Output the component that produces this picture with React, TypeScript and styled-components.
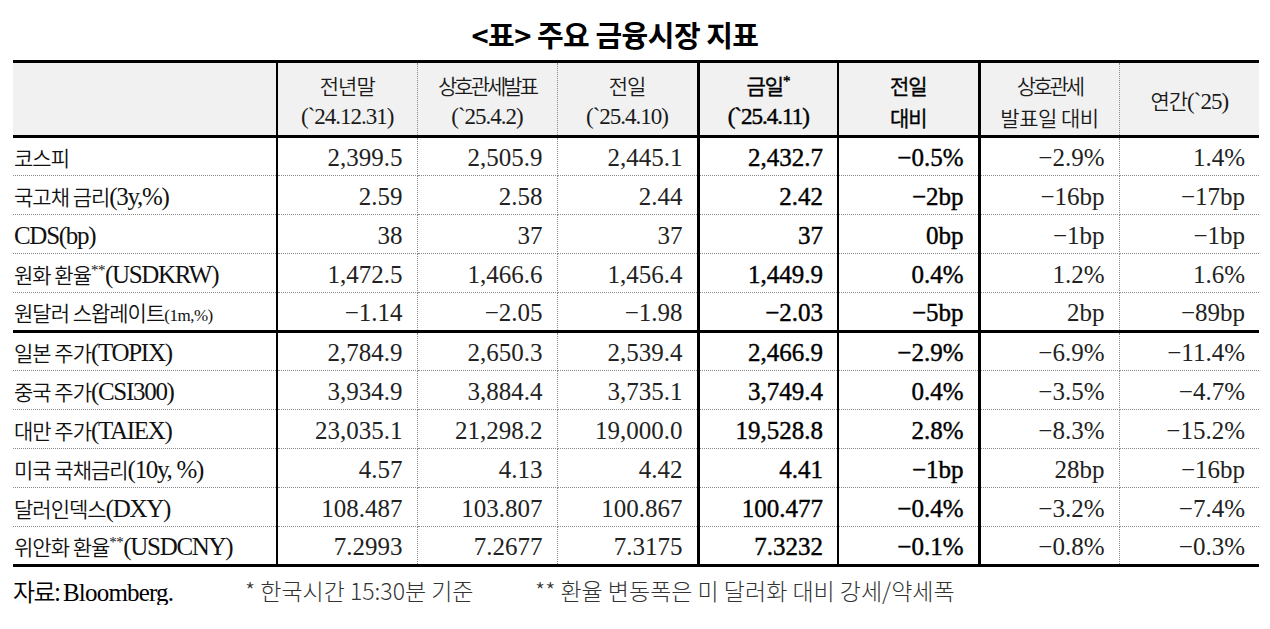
import React from "react";
import styled, { createGlobalStyle, css } from "styled-components";

const Global = createGlobalStyle`
  html, body { margin: 0; padding: 0; background: #fff; }
  body { font-family: "Liberation Serif", "Noto Sans CJK KR", serif; color: #111; }
`;

type Edge = "dot" | "box" | "mid" | "label" | "none";

const edgeCss = (e: Edge) => {
  switch (e) {
    case "dot":
      return css`border-right: 1px dotted #8a8a8a;`;
    case "box":
      return css`border-right: 3px solid #000;`;
    case "mid":
      return css`border-right: 2px solid #000;`;
    case "label":
      return css`border-right: 2px solid #000;`;
    default:
      return css`border-right: none;`;
  }
};

const Page = styled.div`
  width: 1246px;
  padding: 0 11px 0 13px;
`;

const Title = styled.h1`
  margin: 0;
  padding: 16px 42px 8px 0;
  text-align: center;
  font-family: "Noto Sans CJK KR", sans-serif;
  font-weight: 700;
  font-size: 29px;
  line-height: 36px;
  letter-spacing: -0.5px;
  color: #000;
`;

const Table = styled.table`
  width: 1246px;
  border-collapse: collapse;
  table-layout: fixed;
`;

const HeadRow = styled.tr`
  height: 75px;
  background: #f1f1f1;
`;

const BodyRow = styled.tr`
  height: 39px;
`;

const HeadCell = styled.th<{ $edge: Edge; $strong?: boolean }>`
  border-top: 3px solid #000;
  border-bottom: 3px solid #000;
  ${(p) => edgeCss(p.$edge)}
  padding: 4px 0 0;
  text-align: center;
  vertical-align: middle;
  font-weight: 400;
  color: ${(p) => (p.$strong ? "#000" : "#1a1a1a")};
  ${(p) => p.$strong && css`-webkit-text-stroke: 0.45px #000;`}
`;

const HeadLine = styled.div<{ $tight?: number }>`
  font-family: "Noto Sans CJK KR", sans-serif;
  font-weight: 350;
  font-size: 21px;
  line-height: 32px;
  letter-spacing: ${(p) => (p.$tight !== undefined ? p.$tight : -1)}px;
  white-space: pre;
`;

const DateLine = styled.div`
  font-family: "Liberation Serif", serif;
  font-size: 23px;
  line-height: 32px;
  letter-spacing: -1px;
  white-space: nowrap;
`;

const LatIn = styled.span`
  font-family: "Liberation Serif", serif;
  font-size: 23px;
  letter-spacing: -1px;
`;

const Star = styled.sup`
  font-family: "Liberation Serif", serif;
  font-size: 15px;
  vertical-align: 8px;
  line-height: 0;
  letter-spacing: -0.5px;
`;

const LabelCell = styled.td<{ $end?: boolean }>`
  border-bottom: ${(p) => (p.$end ? "3px solid #000" : "1px dotted #8a8a8a")};
  border-right: 2px solid #000;
  padding: 1px 0 0 1px;
  text-align: left;
  vertical-align: middle;
  white-space: nowrap;
  font-family: "Noto Sans CJK KR", sans-serif;
  font-weight: 350;
  font-size: 21px;
  letter-spacing: -1px;
  color: #111;
`;

const Lat = styled.span`
  font-family: "Liberation Serif", serif;
  font-weight: 400;
  font-size: 25px;
  letter-spacing: -1.3px;
`;

const SmallLat = styled.span`
  font-family: "Liberation Serif", serif;
  font-size: 17px;
  letter-spacing: -0.5px;
`;

const Cell = styled.td<{ $edge: Edge; $strong?: boolean; $end?: boolean }>`
  border-bottom: ${(p) => (p.$end ? "3px solid #000" : "1px dotted #8a8a8a")};
  ${(p) => edgeCss(p.$edge)}
  padding: 2px 14px 0 0;
  text-align: right;
  vertical-align: middle;
  white-space: nowrap;
  font-family: "Liberation Serif", serif;
  font-size: 25px;
  line-height: 1;
  color: ${(p) => (p.$strong ? "#000" : "#222")};
  ${(p) => p.$strong && css`-webkit-text-stroke: 0.4px #000;`}
`;

const Footer = styled.div`
  display: flex;
  align-items: center;
  margin-top: 8px;
  height: 30px;
`;

const Source = styled.div<{ $w: number }>`
  width: ${(p) => p.$w}px;
  flex: none;
  white-space: nowrap;
  font-family: "Noto Sans CJK KR", sans-serif;
  font-weight: 350;
  font-size: 24px;
  letter-spacing: -1.5px;
  color: #000;
`;

const SourceLat = styled.span`
  font-family: "Liberation Serif", serif;
  font-size: 25px;
  letter-spacing: -0.8px;
`;

const Note = styled.div<{ $w?: number }>`
  ${(p) => (p.$w ? `width: ${p.$w}px; flex: none;` : "")}
  white-space: nowrap;
  font-family: "Noto Sans CJK KR", sans-serif;
  font-weight: 300;
  font-size: 23px;
  color: #333;
`;

const edges: Edge[] = ["dot", "dot", "box", "mid", "box", "dot", "none"];
const widths = [264, 140, 140, 141, 140, 141, 140, 140];

type Row = { label: React.ReactNode; v: string[]; end?: boolean };

const rows: Row[] = [
  { label: <>코스피</>, v: ["2,399.5", "2,505.9", "2,445.1", "2,432.7", "−0.5%", "−2.9%", "1.4%"] },
  { label: <>국고채 금리<Lat>(3y,%)</Lat></>, v: ["2.59", "2.58", "2.44", "2.42", "−2bp", "−16bp", "−17bp"] },
  { label: <Lat>CDS(bp)</Lat>, v: ["38", "37", "37", "37", "0bp", "−1bp", "−1bp"] },
  { label: <>원화 환율<Star>**</Star><Lat>(USDKRW)</Lat></>, v: ["1,472.5", "1,466.6", "1,456.4", "1,449.9", "0.4%", "1.2%", "1.6%"] },
  { label: <>원달러 스왑레이트<SmallLat>(1m,%)</SmallLat></>, v: ["−1.14", "−2.05", "−1.98", "−2.03", "−5bp", "2bp", "−89bp"], end: true },
  { label: <>일본 주가<Lat>(TOPIX)</Lat></>, v: ["2,784.9", "2,650.3", "2,539.4", "2,466.9", "−2.9%", "−6.9%", "−11.4%"] },
  { label: <>중국 주가<Lat>(CSI300)</Lat></>, v: ["3,934.9", "3,884.4", "3,735.1", "3,749.4", "0.4%", "−3.5%", "−4.7%"] },
  { label: <>대만 주가<Lat>(TAIEX)</Lat></>, v: ["23,035.1", "21,298.2", "19,000.0", "19,528.8", "2.8%", "−8.3%", "−15.2%"] },
  { label: <>미국 국채금리<Lat>(10y, %)</Lat></>, v: ["4.57", "4.13", "4.42", "4.41", "−1bp", "28bp", "−16bp"] },
  { label: <>달러인덱스<Lat>(DXY)</Lat></>, v: ["108.487", "103.807", "100.867", "100.477", "−0.4%", "−3.2%", "−7.4%"] },
  { label: <>위안화 환율<Star>**</Star><Lat>(USDCNY)</Lat></>, v: ["7.2993", "7.2677", "7.3175", "7.3232", "−0.1%", "−0.8%", "−0.3%"], end: true },
];

export default function App() {
  return (
    <>
      <Global />
      <Page>
        <Title>&lt;표&gt; 주요 금융시장 지표</Title>
        <Table>
          <colgroup>
            {widths.map((w, i) => (
              <col key={i} style={{ width: w }} />
            ))}
          </colgroup>
          <thead>
            <HeadRow>
              <HeadCell $edge="label" />
              <HeadCell $edge="dot">
                <HeadLine>전년말</HeadLine>
                <DateLine>(`24.12.31)</DateLine>
              </HeadCell>
              <HeadCell $edge="dot">
                <HeadLine $tight={-3}>상호관세발표</HeadLine>
                <DateLine>(`25.4.2)</DateLine>
              </HeadCell>
              <HeadCell $edge="box">
                <HeadLine>전일</HeadLine>
                <DateLine>(`25.4.10)</DateLine>
              </HeadCell>
              <HeadCell $edge="mid" $strong>
                <HeadLine>
                  금일<Star>*</Star>
                </HeadLine>
                <DateLine>(`25.4.11)</DateLine>
              </HeadCell>
              <HeadCell $edge="box" $strong>
                <HeadLine>전일</HeadLine>
                <HeadLine>대비</HeadLine>
              </HeadCell>
              <HeadCell $edge="dot">
                <HeadLine $tight={-3}>상호관세</HeadLine>
                <HeadLine $tight={-0.5}>발표일 대비</HeadLine>
              </HeadCell>
              <HeadCell $edge="none">
                <HeadLine>
                  연간<LatIn>(`25)</LatIn>
                </HeadLine>
              </HeadCell>
            </HeadRow>
          </thead>
          <tbody>
            {rows.map((r, ri) => (
              <BodyRow key={ri}>
                <LabelCell $end={r.end}>{r.label}</LabelCell>
                {r.v.map((v, ci) => (
                  <Cell key={ci} $edge={edges[ci]} $strong={ci === 3 || ci === 4} $end={r.end}>
                    {v}
                  </Cell>
                ))}
              </BodyRow>
            ))}
          </tbody>
        </Table>
        <Footer>
          <Source $w={232}>
            자료: <SourceLat>Bloomberg.</SourceLat>
          </Source>
          <Note $w={290}>* 한국시간 15:30분 기준</Note>
          <Note>** 환율 변동폭은 미 달러화 대비 강세/약세폭</Note>
        </Footer>
      </Page>
    </>
  );
}
